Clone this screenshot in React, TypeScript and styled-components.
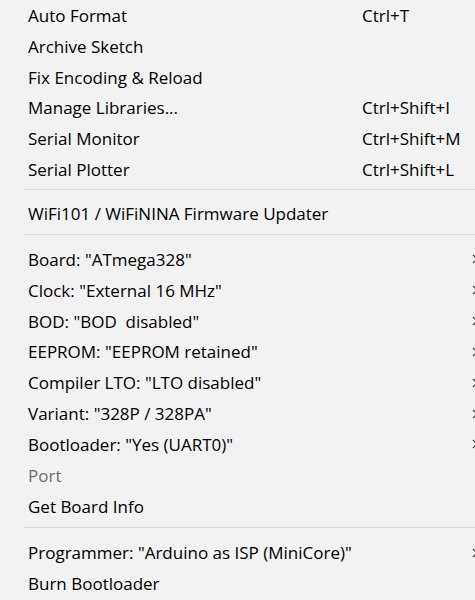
import React from 'react';
import styled, { createGlobalStyle } from 'styled-components';

const GlobalStyle = createGlobalStyle`
  html, body {
    margin: 0;
    padding: 0;
    background: #f2f2f2;
    overflow: hidden;
  }
`;

const Menu = styled.div`
  width: 490px;
  height: 600px;
  background: #f2f2f2;
  font-family: 'Open Sans', 'Noto Sans', sans-serif;
  font-size: 17px;
  color: #000;
  overflow: hidden;
`;

const Row = styled.div<{ $disabled?: boolean }>`
  display: grid;
  grid-template-columns: 334px 110px 1fr;
  align-items: center;
  height: 30.85px;
  padding-left: 28px;
  white-space: pre;
  color: ${({ $disabled }) => ($disabled ? '#6d6d6d' : '#000')};
`;

const Shortcut = styled.span`
  color: #000;
`;

const Arrow = styled.svg`
  width: 6px;
  height: 10px;
  display: block;
`;

const Separator = styled.div<{ $top: number; $bottom: number }>`
  height: 1px;
  margin: ${({ $top, $bottom }) => `${$top}px 0 ${$bottom}px 24px`};
  background: #d7d7d7;
`;

type Item = { label: string; shortcut?: string; sub?: boolean; disabled?: boolean };

const group1: Item[] = [
  { label: 'Auto Format', shortcut: 'Ctrl+T' },
  { label: 'Archive Sketch' },
  { label: 'Fix Encoding & Reload' },
  { label: 'Manage Libraries...', shortcut: 'Ctrl+Shift+I' },
  { label: 'Serial Monitor', shortcut: 'Ctrl+Shift+M' },
  { label: 'Serial Plotter', shortcut: 'Ctrl+Shift+L' },
];

const group2: Item[] = [{ label: 'WiFi101 / WiFiNINA Firmware Updater' }];

const group3: Item[] = [
  { label: 'Board: "ATmega328"', sub: true },
  { label: 'Clock: "External 16 MHz"', sub: true },
  { label: 'BOD: "BOD  disabled"', sub: true },
  { label: 'EEPROM: "EEPROM retained"', sub: true },
  { label: 'Compiler LTO: "LTO disabled"', sub: true },
  { label: 'Variant: "328P / 328PA"', sub: true },
  { label: 'Bootloader: "Yes (UART0)"', sub: true },
  { label: 'Port', disabled: true },
  { label: 'Get Board Info' },
];

const group4: Item[] = [
  { label: 'Programmer: "Arduino as ISP (MiniCore)"', sub: true },
  { label: 'Burn Bootloader' },
];

const MenuRow = ({ item }: { item: Item }) => (
  <Row $disabled={item.disabled}>
    <span>{item.label}</span>
    <Shortcut>{item.shortcut}</Shortcut>
    {item.sub ? (
      <Arrow viewBox="0 0 6 10">
        <path d="M1 1 L5 5 L1 9" fill="none" stroke="#333" strokeWidth="1.2" />
      </Arrow>
    ) : (
      <span />
    )}
  </Row>
);

export default function App() {
  return (
    <>
      <GlobalStyle />
      <Menu>
        {group1.map((i) => (
          <MenuRow key={i.label} item={i} />
        ))}
        <Separator $top={4} $bottom={8} />
        {group2.map((i) => (
          <MenuRow key={i.label} item={i} />
        ))}
        <Separator $top={5} $bottom={9} />
        {group3.map((i) => (
          <MenuRow key={i.label} item={i} />
        ))}
        <Separator $top={5} $bottom={10} />
        {group4.map((i) => (
          <MenuRow key={i.label} item={i} />
        ))}
      </Menu>
    </>
  );
}
